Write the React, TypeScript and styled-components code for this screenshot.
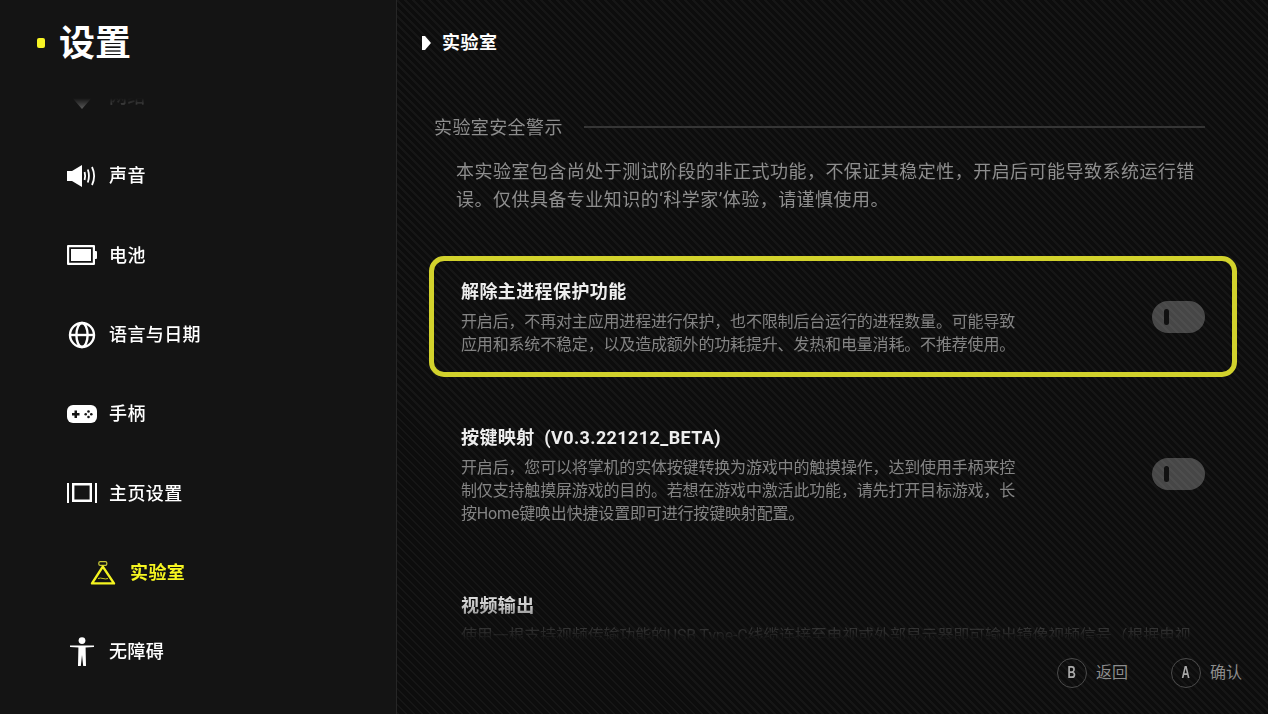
import React from 'react';
import styled, { createGlobalStyle } from 'styled-components';

const GlobalStyle = createGlobalStyle`
  html, body, #root {
    margin: 0;
    padding: 0;
    width: 100%;
    height: 100%;
    overflow: hidden;
    background: #0e0e0e;
  }
  * {
    box-sizing: border-box;
  }
  body {
    font-family: Roboto, 'Noto Sans CJK SC', 'Noto Sans', sans-serif;
  }
`;

const WifiIcon = () => (
  <svg width="30" height="30" viewBox="0 0 30 30" fill="#fff">
    <path d="M1 11 C9 3 21 3 29 11 L15 27 Z" />
  </svg>
);

const SoundIcon = () => (
  <svg width="30" height="24" viewBox="0 0 30 24" fill="none" stroke="#fff">
    <path d="M0 7 H5 L15 1 V23 L5 17 H0 Z" fill="#fff" stroke="none" />
    <path d="M17.6 8 C18.3 10.5 18.3 13.5 17.6 16" strokeWidth="1.8" />
    <path d="M20.8 5.5 C22.2 9.5 22.2 14.5 20.8 18.5" strokeWidth="1.8" />
    <path d="M25 3 C27.6 8.5 27.6 15.5 25 21" strokeWidth="1.8" />
  </svg>
);

const BatteryIcon = () => (
  <svg width="30" height="20" viewBox="0 0 30 20" fill="#fff">
    <path fillRule="evenodd" d="M1 0 H27 Q28 0 28 1 V19 Q28 20 27 20 H1 Q0 20 0 19 V1 Q0 0 1 0 Z M2.2 2.2 V17.8 H25.8 V2.2 Z" />
    <rect x="4" y="4" width="20" height="12" />
    <path d="M28 6 H29 Q30 6 30 7 V13 Q30 14 29 14 H28 Z" />
  </svg>
);

const GlobeIcon = () => (
  <svg width="28" height="28" viewBox="0 0 28 28" fill="none" stroke="#fff" strokeWidth="2.4">
    <circle cx="14" cy="14" r="12" />
    <ellipse cx="14" cy="14" rx="5.6" ry="12" />
    <path d="M2 14 H26" />
  </svg>
);

const GamepadIcon = () => (
  <svg width="30" height="18" viewBox="0 0 30 18">
    <rect width="30" height="18" rx="6" fill="#fff" />
    <path d="M7.5 5.5 H10 V8 H12.5 V10.5 H10 V13 H7.5 V10.5 H5 V8 H7.5 Z" fill="#141414" />
    <circle cx="21.5" cy="6.5" r="1.3" fill="#141414" />
    <circle cx="21.5" cy="12" r="1.3" fill="#141414" />
    <circle cx="18.7" cy="9.2" r="1.3" fill="#141414" />
    <circle cx="24.3" cy="9.2" r="1.3" fill="#141414" />
  </svg>
);

const HomeIcon = () => (
  <svg width="30" height="20" viewBox="0 0 30 20" fill="#fff">
    <rect x="0" y="0" width="2" height="20" />
    <rect x="28" y="0" width="2" height="20" />
    <path fillRule="evenodd" d="M5 0 H25 V19 H5 Z M7.4 2.4 V16.6 H22.6 V2.4 Z" />
  </svg>
);

const FlaskIcon = () => (
  <svg width="26" height="24" viewBox="0 0 26 24" fill="none" stroke="#f5f520">
    <rect x="8.8" y="0.6" width="8" height="3.8" rx="1.4" strokeWidth="1.2" stroke="#c9c93a" />
    <path d="M12.8 5.6 L2 22.4 H24 Z" strokeWidth="2.4" strokeLinejoin="round" />
    <path d="M8 17.5 C11 16 15 19 18 17.5" strokeWidth="0.8" />
  </svg>
);

const PersonIcon = () => (
  <svg width="26" height="30" viewBox="0 0 26 30" fill="#fff">
    <circle cx="13" cy="3.6" r="3.4" />
    <path d="M1 8.4 H25 V10 L16.6 10.6 L17 29 H14.2 L13 18 L11.8 29 H9 L9.4 10.6 L1 10 Z" />
  </svg>
);

const navItems = [
  { label: '网络', icon: <WifiIcon /> },
  { label: '声音', icon: <SoundIcon /> },
  { label: '电池', icon: <BatteryIcon /> },
  { label: '语言与日期', icon: <GlobeIcon /> },
  { label: '手柄', icon: <GamepadIcon /> },
  { label: '主页设置', icon: <HomeIcon /> },
  { label: '实验室', icon: <FlaskIcon />, active: true },
  { label: '无障碍', icon: <PersonIcon /> },
];

const settings = [
  {
    title: '解除主进程保护功能',
    desc: '开启后，不再对主应用进程进行保护，也不限制后台运行的进程数量。可能导致应用和系统不稳定，以及造成额外的功耗提升、发热和电量消耗。不推荐使用。',
    focused: true,
    toggle: true,
  },
  {
    title: '按键映射\u00a0\u00a0(V0.3.221212_BETA)',
    desc: '开启后，您可以将掌机的实体按键转换为游戏中的触摸操作，达到使用手柄来控制仅支持触摸屏游戏的目的。若想在游戏中激活此功能，请先打开目标游戏，长按Home键唤出快捷设置即可进行按键映射配置。',
    toggle: true,
  },
  {
    title: '视频输出',
    desc: '使用一根支持视频传输功能的USB Type-C线缆连接至电视或外部显示器即可输出镜像视频信号（根据电视',
  },
];

const App = () => {
  return (
    <>
      <GlobalStyle />
      <Page>
        <Sidebar>
          <SidebarHeader>
            <Dot />
            <PageTitle>设置</PageTitle>
          </SidebarHeader>
          <NavWindow>
            <NavList>
              {navItems.map((item) => (
                <NavRow key={item.label} $active={item.active}>
                  <NavIcon $active={item.active}>{item.icon}</NavIcon>
                  <NavLabel $active={item.active}>{item.label}</NavLabel>
                </NavRow>
              ))}
            </NavList>
          </NavWindow>
        </Sidebar>
        <Main>
          <MainHeader>
            <svg width="9" height="14" viewBox="0 0 9 14" fill="#fff">
              <path d="M0 0 H3 L9 7 L3 14 H0 Z" />
            </svg>
            <MainTitle>实验室</MainTitle>
          </MainHeader>
          <Scroller>
            <SectionHead>
              <SectionTitle>实验室安全警示</SectionTitle>
              <SectionRule />
            </SectionHead>
            <Notice>
              本实验室包含尚处于测试阶段的非正式功能，不保证其稳定性，开启后可能导致系统运行错误。仅供具备专业知识的‘科学家’体验，请谨慎使用。
            </Notice>
            <CardList>
              {settings.map((s) => (
                <Card key={s.title} $focused={s.focused}>
                  <CardText $wide={!s.toggle}>
                    <CardTitle>{s.title}</CardTitle>
                    <CardDesc>{s.desc}</CardDesc>
                  </CardText>
                  {s.toggle && (
                    <Toggle>
                      <Knob />
                    </Toggle>
                  )}
                </Card>
              ))}
            </CardList>
          </Scroller>
          <Footer>
            <Hint>
              <HintKey>
                <HintLetter>B</HintLetter>
              </HintKey>
              <HintLabel>返回</HintLabel>
            </Hint>
            <Hint>
              <HintKey>
                <HintLetter>A</HintLetter>
              </HintKey>
              <HintLabel>确认</HintLabel>
            </Hint>
          </Footer>
        </Main>
      </Page>
    </>
  );
};

export default App;

const Page = styled.div`
  display: flex;
  width: 1268px;
  height: 714px;
  overflow: hidden;
`;

const Sidebar = styled.aside`
  display: flex;
  flex-direction: column;
  flex: 0 0 397px;
  height: 100%;
  background: #141414;
  border-right: 1px solid #262626;
`;

const SidebarHeader = styled.header`
  display: flex;
  align-items: center;
  gap: 14px;
  flex: 0 0 85px;
  padding-left: 37px;
`;

const Dot = styled.span`
  width: 8px;
  height: 10px;
  border-radius: 2px;
  background: #f7f425;
`;

const PageTitle = styled.h1`
  margin: 0;
  padding-top: 3px;
  font-size: 36px;
  font-weight: 700;
  line-height: 1;
  color: #fff;
`;

const NavWindow = styled.div`
  flex: 1;
  overflow: hidden;
  -webkit-mask-image: linear-gradient(to bottom, transparent 13px, #000 50px);
  mask-image: linear-gradient(to bottom, transparent 13px, #000 50px);
`;

const NavList = styled.ul`
  list-style: none;
  margin: -28px 0 0;
  padding: 0;
`;

const NavRow = styled.li<{ $active?: boolean }>`
  display: flex;
  align-items: center;
  height: 79.33px;
  padding-left: ${(p) => (p.$active ? '90px' : '67px')};
`;

const NavIcon = styled.span<{ $active?: boolean }>`
  display: flex;
  align-items: center;
  justify-content: center;
  width: ${(p) => (p.$active ? '26px' : '30px')};
  margin-right: ${(p) => (p.$active ? '14px' : '12px')};
`;

const NavLabel = styled.span<{ $active?: boolean }>`
  padding-top: 1px;
  font-size: 18px;
  line-height: 26px;
  letter-spacing: 0.4px;
  font-weight: ${(p) => (p.$active ? 700 : 500)};
  color: ${(p) => (p.$active ? '#f5f520' : '#fff')};
`;

const Main = styled.main`
  display: flex;
  flex-direction: column;
  flex: 1;
  height: 100%;
  background-color: #0d0d0d;
  background-image: repeating-linear-gradient(
    45deg,
    #161616 0,
    #161616 2px,
    transparent 2px,
    transparent 5.66px
  );
`;

const MainHeader = styled.header`
  display: flex;
  align-items: center;
  gap: 11px;
  flex: 0 0 85px;
  padding-left: 25px;
`;

const MainTitle = styled.h2`
  margin: 0;
  padding-top: 1px;
  font-size: 18px;
  font-weight: 700;
  line-height: 26px;
  letter-spacing: 0.5px;
  color: #fff;
`;

const Scroller = styled.div`
  flex: 0 0 565px;
  overflow: hidden;
  padding: 30px 31px 0 32px;
  -webkit-mask-image: linear-gradient(
    to bottom,
    #000 500px,
    rgba(0, 0, 0, 0.85) 520px,
    rgba(0, 0, 0, 0.22) 547px,
    transparent 556px
  );
  mask-image: linear-gradient(
    to bottom,
    #000 500px,
    rgba(0, 0, 0, 0.85) 520px,
    rgba(0, 0, 0, 0.22) 547px,
    transparent 556px
  );
`;

const SectionHead = styled.div`
  display: flex;
  align-items: center;
  gap: 21px;
  padding-left: 5px;
`;

const SectionTitle = styled.h3`
  margin: 0;
  font-size: 18px;
  font-weight: 400;
  line-height: 26px;
  letter-spacing: 0.4px;
  color: #8c8c8c;
`;

const SectionRule = styled.div`
  flex: 1;
  height: 2px;
  margin: 0 32px 2px 0;
  background: #353535;
`;

const Notice = styled.p`
  margin: 17px 0 0 27px;
  width: 745px;
  font-size: 18px;
  line-height: 28px;
  letter-spacing: 0.47px;
  color: #8e8e8e;
`;

const CardList = styled.div`
  display: flex;
  flex-direction: column;
  gap: 26px;
  margin-top: 42px;
`;

const Card = styled.div<{ $focused?: boolean }>`
  display: flex;
  align-items: center;
  justify-content: space-between;
  flex: none;
  min-height: ${(p) => (p.$focused ? '121px' : '0')};
  padding: 17px 27px 15px;
  border: 5px solid ${(p) => (p.$focused ? '#d2d22c' : 'transparent')};
  border-radius: 15px;
`;

const CardText = styled.div<{ $wide?: boolean }>`
  width: ${(p) => (p.$wide ? '740px' : '556px')};
`;

const CardTitle = styled.h4`
  margin: 0 0 5px;
  font-size: 18px;
  font-weight: 700;
  line-height: 26px;
  letter-spacing: 0.4px;
  color: #eee;
`;

const CardDesc = styled.p`
  margin: 0;
  font-size: 16px;
  line-height: 23px;
  letter-spacing: -0.17px;
  color: #848484;
`;

const Toggle = styled.div`
  display: flex;
  align-items: center;
  flex: none;
  width: 53px;
  height: 32px;
  margin-bottom: 2px;
  padding-left: 12px;
  border-radius: 16px;
  background: rgba(255, 255, 255, 0.24);
`;

const Knob = styled.span`
  width: 5px;
  height: 16px;
  border-radius: 2.5px;
  background: #111;
`;

const Footer = styled.footer`
  display: flex;
  align-items: center;
  justify-content: flex-end;
  gap: 43px;
  flex: 1;
  padding: 0 26px 18px 0;
`;

const Hint = styled.div`
  display: flex;
  align-items: center;
  gap: 9px;
`;

const HintKey = styled.span`
  display: flex;
  align-items: center;
  justify-content: center;
  width: 30px;
  height: 30px;
  border: 1px solid #4a4a4a;
  border-radius: 50%;
`;

const HintLetter = styled.span`
  font-family: 'Liberation Sans', sans-serif;
  font-size: 16px;
  font-weight: 700;
  line-height: 1;
  color: #aaa;
  transform: scaleX(0.72);
`;

const HintLabel = styled.span`
  font-size: 16px;
  line-height: 24px;
  color: #8c8c8c;
`;
